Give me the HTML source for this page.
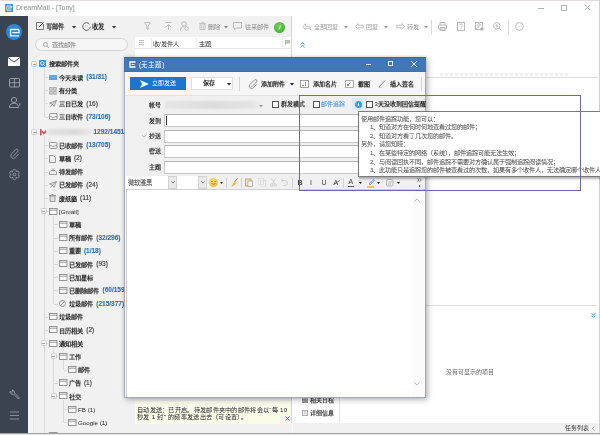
<!DOCTYPE html><html lang="zh-CN"><head><meta charset="utf-8"><style>
html,body{margin:0;padding:0;width:600px;height:435px;overflow:hidden;background:#fff;font-family:"Liberation Sans",sans-serif;}
.t{position:absolute;white-space:nowrap;}
.w{font-weight:normal}
#root{position:absolute;left:0;top:0;width:600px;height:435px;will-change:transform}
svg{overflow:visible}
</style></head><body><div id="root">
<div style="position:absolute;left:0px;top:0px;width:600px;height:1px;background:#e2dddd"></div>
<div style="position:absolute;left:5px;top:4px;width:8px;height:8px;background:#4497d3"></div>
<svg style="position:absolute;left:5px;top:4px;" width="8" height="8" viewBox="0 0 8 8"><path d="M6.3 2H1.8V6.2H6.3M6.3 2V4H3" stroke="#e8f4ff" stroke-width="0.9" fill="none"/></svg>
<div class="t" style="left:16.0px;top:3.2px;font-size:7px;line-height:10px;color:#8e8e8e;font-weight:normal;">DreamMail - [Tony]</div>
<div style="position:absolute;left:538px;top:8px;width:6px;height:1px;background:#b0b0b0"></div>
<svg style="position:absolute;left:561px;top:5px;" width="6" height="6" viewBox="0 0 6 6"><rect x="0.5" y="0.5" width="5" height="5" stroke="#acacac" stroke-width="0.9" fill="none"/></svg>
<svg style="position:absolute;left:585px;top:5px;" width="5" height="5" viewBox="0 0 5 5"><path d="M0 0L5 5M5 0L0 5" stroke="#acacac" stroke-width="0.9"/></svg>
<div style="position:absolute;left:0px;top:16px;width:28px;height:419px;background:#3a4350"></div>
<div style="position:absolute;left:6px;top:24px;width:16px;height:16px;background:#2a87d6;border-radius:50%"></div>
<svg style="position:absolute;left:6px;top:24px;" width="16" height="16" viewBox="0 0 16 16"><path d="M13 5.5H4.5V11.8H13M13 5.5V8.6H6.3" stroke="#e6f3ff" stroke-width="1.3" fill="none"/></svg>
<svg style="position:absolute;left:8px;top:57px;" width="12" height="9" viewBox="0 0 12 9"><rect x="0" y="0" width="12" height="9" fill="#fff"/><path d="M0 0.5L6 5L12 0.5" stroke="#3a4350" stroke-width="1" fill="none"/></svg>
<svg style="position:absolute;left:9px;top:78px;" width="11" height="10" viewBox="0 0 11 10"><rect x="0.5" y="0.5" width="10" height="8.5" rx="1" stroke="#a3a9b1" stroke-width="0.9" fill="none"/><path d="M5.5 0.5v8.5M0.5 4.75h10" stroke="#a3a9b1" stroke-width="0.8"/></svg>
<svg style="position:absolute;left:9px;top:97px;" width="12" height="11" viewBox="0 0 12 11"><circle cx="5" cy="3" r="2.6" stroke="#a3a9b1" stroke-width="0.9" fill="none"/><path d="M0.5 10.5c0-3 2-4.3 4.5-4.3s4.5 1.3 4.5 4.3z" stroke="#a3a9b1" stroke-width="0.9" fill="none"/><path d="M10.8 6v3" stroke="#a3a9b1" stroke-width="0.8"/></svg>
<svg style="position:absolute;left:9.5px;top:147.5px;" width="10" height="11" viewBox="0 0 10 11"><path d="M3.2 8.2L7.6 3.6a1.4 1.4 0 0 0-2-2L1.6 5.8a2.6 2.6 0 0 0 3.7 3.7L9 5.6" stroke="#9aa1aa" stroke-width="0.9" fill="none"/></svg>
<svg style="position:absolute;left:9px;top:168.5px;" width="11" height="11" viewBox="0 0 11 11"><path d="M3.85 2.64 C3.37 -0.32 7.63 -0.32 7.15 2.64 C9.48 0.75 11.61 4.43 8.80 5.50 C11.61 6.57 9.48 10.25 7.15 8.36 C7.63 11.32 3.37 11.32 3.85 8.36 C1.52 10.25 -0.61 6.57 2.20 5.50 C-0.61 4.43 1.52 0.75 3.85 2.64z" stroke="#9aa1aa" stroke-width="0.9" fill="none"/><circle cx="5.5" cy="5.5" r="1.4" stroke="#9aa1aa" stroke-width="0.9" fill="none"/></svg>
<svg style="position:absolute;left:9px;top:389px;" width="11" height="11" viewBox="0 0 11 11"><path d="M1 2.5a2.5 2.5 0 0 0 3.5 2.5l5 5 1-1-5-5A2.5 2.5 0 0 0 3 1l1.2 1.2-1 1z" stroke="#9aa1aa" stroke-width="0.9" fill="none"/></svg>
<svg style="position:absolute;left:10px;top:411px;" width="9" height="9" viewBox="0 0 9 9"><path d="M0 1h9M0 4.5h9M0 8h9" stroke="#8e959e" stroke-width="0.9"/></svg>
<div style="position:absolute;left:28px;top:16px;width:264px;height:419px;background:#f1f1f1"></div>
<div style="position:absolute;left:28px;top:60px;width:5px;height:373px;background:#f5f5f5"></div>
<div style="position:absolute;left:33px;top:60px;width:1px;height:373px;background:#e7e7e7"></div>
<svg style="position:absolute;left:36px;top:22px;" width="8" height="8" viewBox="0 0 8 8"><path d="M6.5 0.5H0.5v7h7V2" stroke="#666" stroke-width="0.9" fill="none"/><path d="M3 5l4.5-4.5" stroke="#444" stroke-width="1"/></svg>
<div class="t" style="left:46.0px;top:22.2px;font-size:6.3px;line-height:9px;color:#2a2a2a;font-weight:600;">写邮件</div>
<svg style="position:absolute;left:71.5px;top:26px;" width="4" height="2.5" viewBox="0 0 4 2.5"><path d="M0 0h4L2 2.5z" fill="#333"/></svg>
<svg style="position:absolute;left:82px;top:22px;" width="9" height="9" viewBox="0 0 9 9"><path d="M7.5 2.2A3.8 3.8 0 1 0 8.3 4.8" stroke="#555" stroke-width="0.9" fill="none"/></svg>
<div class="t" style="left:92.0px;top:22.2px;font-size:6.3px;line-height:9px;color:#2a2a2a;font-weight:600;">收发</div>
<svg style="position:absolute;left:111.5px;top:26px;" width="4" height="2.5" viewBox="0 0 4 2.5"><path d="M0 0h4L2 2.5z" fill="#333"/></svg>
<div style="position:absolute;left:35px;top:38px;width:93px;height:13px;box-sizing:border-box;border:1px solid #d4d4d4;border-radius:7px;background:#f5f5f5"></div>
<svg style="position:absolute;left:43px;top:41.5px;" width="6" height="6" viewBox="0 0 6 6"><circle cx="2.5" cy="2.5" r="2" stroke="#999" stroke-width="0.8" fill="none"/><path d="M4 4l1.8 1.8" stroke="#999" stroke-width="0.8"/></svg>
<div class="t" style="left:52.0px;top:40.1px;font-size:6.2px;line-height:9px;color:#777;font-weight:500;">查找邮件</div>
<div style="position:absolute;left:44px;top:67px;width:1px;height:50px;background:#d9d9d9"></div>
<div style="position:absolute;left:44px;top:136px;width:1px;height:300px;background:#d9d9d9"></div>
<div style="position:absolute;left:53px;top:216px;width:1px;height:88px;background:#d9d9d9"></div>
<div style="position:absolute;left:53px;top:348px;width:1px;height:48px;background:#d9d9d9"></div>
<div style="position:absolute;left:63px;top:360px;width:1px;height:10px;background:#d9d9d9"></div>
<div style="position:absolute;left:63px;top:400px;width:1px;height:23px;background:#d9d9d9"></div>
<div style="position:absolute;left:31px;top:61px;width:6px;height:6px;box-sizing:border-box;border:1px solid #cdcdcd;border-radius:1.5px;background:#f6f6f6"></div>
<div style="position:absolute;left:32.5px;top:63.5px;width:3px;height:1px;background:#a8a8a8"></div>
<div style="position:absolute;left:39px;top:60px;width:7px;height:7px;background:#3892db;border-radius:1px"></div>
<svg style="position:absolute;left:39px;top:60px;" width="7" height="7" viewBox="0 0 7 7"><circle cx="3.3" cy="3.3" r="1.7" stroke="#fff" stroke-width="0.9" fill="none"/><path d="M4.5 4.5l1.3 1.3" stroke="#fff" stroke-width="0.9"/></svg>
<div class="t" style="left:49.0px;top:59.2px;font-size:6.2px;line-height:9px;color:#262626;font-weight:600;">搜索邮件夹</div>
<div style="position:absolute;left:45px;top:77px;width:3px;height:1px;background:#d9d9d9"></div>
<div style="position:absolute;left:49px;top:74.5px;width:8px;height:5px;background:#5ea2e2"></div>
<svg style="position:absolute;left:49px;top:74.5px;" width="8" height="5" viewBox="0 0 8 5"><path d="M0.3 0.5L4 2.8L7.7 0.5" stroke="#8cc0ee" stroke-width="0.6" fill="none"/></svg>
<div class="t" style="left:59.0px;top:72.5px;font-size:6.2px;line-height:9px;color:#262626;font-weight:600;">今天未读</div>
<div class="t" style="left:86.3px;top:72.0px;font-size:6.5px;line-height:10px;color:#2f6fb8;font-weight:bold;-webkit-text-stroke:0.1px #2f6fb8">(31/31)</div>
<div style="position:absolute;left:45px;top:90px;width:3px;height:1px;background:#d9d9d9"></div>
<svg style="position:absolute;left:49px;top:86.5px;" width="8" height="8" viewBox="0 0 8 8"><rect x="0.7" y="0.7" width="2.4" height="2.4" stroke="#8c8c8c" stroke-width="0.8" fill="none"/><rect x="4.7" y="0.7" width="2.4" height="2.4" stroke="#8c8c8c" stroke-width="0.8" fill="none"/><rect x="0.7" y="4.7" width="2.4" height="2.4" stroke="#8c8c8c" stroke-width="0.8" fill="none"/><rect x="4.7" y="4.7" width="2.4" height="2.4" stroke="#8c8c8c" stroke-width="0.8" fill="none"/></svg>
<div class="t" style="left:59.0px;top:85.7px;font-size:6.2px;line-height:9px;color:#262626;font-weight:600;">有分类</div>
<div style="position:absolute;left:45px;top:103px;width:3px;height:1px;background:#d9d9d9"></div>
<svg style="position:absolute;left:49px;top:100px;" width="8" height="7" viewBox="0 0 8 7"><path d="M0.5 3L7.5 0.5L5 6.5L3.5 4z M3.5 4L7.5 0.5 M1.5 6.5L3.5 4" stroke="#8c8c8c" stroke-width="0.8" fill="none"/></svg>
<div class="t" style="left:59.0px;top:99.0px;font-size:6.2px;line-height:9px;color:#262626;font-weight:600;">三日已发</div>
<div class="t" style="left:86.3px;top:98.5px;font-size:6.5px;line-height:10px;color:#3a3a3a;font-weight:normal;-webkit-text-stroke:0.15px #3a3a3a">(16)</div>
<div style="position:absolute;left:45px;top:117px;width:3px;height:1px;background:#d9d9d9"></div>
<svg style="position:absolute;left:49px;top:113px;" width="8" height="7" viewBox="0 0 8 7"><rect x="0.5" y="0.5" width="7.5" height="6" rx="1" stroke="#8c8c8c" stroke-width="0.9" fill="none"/><path d="M0.5 3.5h2l0.8 1h1.9l0.8-1h2" stroke="#8c8c8c" stroke-width="0.8" fill="none"/></svg>
<div class="t" style="left:59.0px;top:112.2px;font-size:6.2px;line-height:9px;color:#262626;font-weight:600;">三日收件</div>
<div class="t" style="left:86.3px;top:111.7px;font-size:6.5px;line-height:10px;color:#2f6fb8;font-weight:bold;-webkit-text-stroke:0.1px #2f6fb8">(73/106)</div>
<div style="position:absolute;left:31px;top:129px;width:6px;height:6px;box-sizing:border-box;border:1px solid #cdcdcd;border-radius:1.5px;background:#f6f6f6"></div>
<div style="position:absolute;left:32.5px;top:131.5px;width:3px;height:1px;background:#a8a8a8"></div>
<svg style="position:absolute;left:40px;top:128px;" width="7" height="8" viewBox="0 0 7 8"><path d="M0.8 1v6.5" stroke="#a8323e" stroke-width="1.2"/><path d="M1.5 1.8L3.8 4.2 6.2 1.8V4.5L3.8 6.6 1.5 4.5z" fill="#e4505e"/></svg>
<div style="position:absolute;left:48px;top:129px;width:45px;height:6px;background:linear-gradient(90deg,#e2e2e2,#d9d9d9 60%,#ebebeb);filter:blur(1px)"></div>
<div class="t" style="left:93.5px;top:127.0px;font-size:6.5px;line-height:10px;color:#2f6fb8;font-weight:bold;-webkit-text-stroke:0.1px #2f6fb8">1292/1451)</div>
<div style="position:absolute;left:45px;top:145px;width:3px;height:1px;background:#d9d9d9"></div>
<svg style="position:absolute;left:49px;top:142px;" width="8" height="7" viewBox="0 0 8 7"><rect x="0.5" y="0.5" width="7.5" height="6" rx="1" stroke="#8c8c8c" stroke-width="0.9" fill="none"/><path d="M0.5 3.5h2l0.8 1h1.9l0.8-1h2" stroke="#8c8c8c" stroke-width="0.8" fill="none"/></svg>
<div class="t" style="left:59.0px;top:140.7px;font-size:6.2px;line-height:9px;color:#262626;font-weight:600;">已收邮件</div>
<div class="t" style="left:86.3px;top:140.2px;font-size:6.5px;line-height:10px;color:#2f6fb8;font-weight:bold;-webkit-text-stroke:0.1px #2f6fb8">(13/705)</div>
<div style="position:absolute;left:45px;top:158px;width:3px;height:1px;background:#d9d9d9"></div>
<svg style="position:absolute;left:49px;top:154.5px;" width="7" height="8" viewBox="0 0 7 8"><path d="M0.5 0.5h4l2 2v5h-6z" stroke="#8c8c8c" stroke-width="0.9" fill="none"/></svg>
<div class="t" style="left:59.0px;top:153.9px;font-size:6.2px;line-height:9px;color:#262626;font-weight:600;">草稿</div>
<div class="t" style="left:73.9px;top:153.4px;font-size:6.5px;line-height:10px;color:#3a3a3a;font-weight:normal;-webkit-text-stroke:0.15px #3a3a3a">(2)</div>
<div style="position:absolute;left:45px;top:172px;width:3px;height:1px;background:#d9d9d9"></div>
<svg style="position:absolute;left:49px;top:168px;" width="8" height="7" viewBox="0 0 8 7"><path d="M0.5 6.5h7v-2.5l-1.5-1.5h-4l-1.5 1.5z" stroke="#8c8c8c" stroke-width="0.8" fill="none"/><path d="M4 0.3v3" stroke="#8c8c8c" stroke-width="0.8"/></svg>
<div class="t" style="left:59.0px;top:167.1px;font-size:6.2px;line-height:9px;color:#262626;font-weight:600;">待发邮件</div>
<div style="position:absolute;left:45px;top:185px;width:3px;height:1px;background:#d9d9d9"></div>
<svg style="position:absolute;left:49px;top:181px;" width="8" height="7" viewBox="0 0 8 7"><path d="M0.5 3L7.5 0.5L5 6.5L3.5 4z M3.5 4L7.5 0.5 M1.5 6.5L3.5 4" stroke="#8c8c8c" stroke-width="0.8" fill="none"/></svg>
<div class="t" style="left:59.0px;top:180.3px;font-size:6.2px;line-height:9px;color:#262626;font-weight:600;">已发邮件</div>
<div class="t" style="left:86.3px;top:179.8px;font-size:6.5px;line-height:10px;color:#3a3a3a;font-weight:normal;-webkit-text-stroke:0.15px #3a3a3a">(24)</div>
<div style="position:absolute;left:45px;top:198px;width:3px;height:1px;background:#d9d9d9"></div>
<svg style="position:absolute;left:49px;top:193.5px;" width="7" height="8" viewBox="0 0 7 8"><path d="M1 2h5v5.5h-5z" stroke="#8c8c8c" stroke-width="0.8" fill="#ddd"/><path d="M0 1.5h7 M2.5 0.5h2" stroke="#8c8c8c" stroke-width="0.8"/></svg>
<div class="t" style="left:59.0px;top:193.5px;font-size:6.2px;line-height:9px;color:#262626;font-weight:600;">废纸篓</div>
<div class="t" style="left:80.1px;top:193.0px;font-size:6.5px;line-height:10px;color:#3a3a3a;font-weight:normal;-webkit-text-stroke:0.15px #3a3a3a">(11)</div>
<div style="position:absolute;left:45px;top:211px;width:3px;height:1px;background:#d9d9d9"></div>
<div style="position:absolute;left:40.5px;top:208px;width:6px;height:6px;box-sizing:border-box;border:1px solid #cdcdcd;border-radius:1.5px;background:#f6f6f6"></div>
<div style="position:absolute;left:42.0px;top:210.5px;width:3px;height:1px;background:#a8a8a8"></div>
<svg style="position:absolute;left:49px;top:208px;" width="8" height="7" viewBox="0 0 8 7"><rect x="0.5" y="0.5" width="7.5" height="6" stroke="#8c8c8c" stroke-width="0.9" fill="#fafafa"/><path d="M0.5 2.2h7.5" stroke="#8c8c8c" stroke-width="0.9"/></svg>
<div class="t" style="left:59.0px;top:206.7px;font-size:6.2px;line-height:9px;color:#262626;font-weight:600;"><span class="w">[Gmail]</span></div>
<div style="position:absolute;left:54px;top:224px;width:4px;height:1px;background:#d9d9d9"></div>
<svg style="position:absolute;left:59px;top:221px;" width="8" height="7" viewBox="0 0 8 7"><rect x="0.5" y="0.5" width="7.5" height="6" stroke="#8c8c8c" stroke-width="0.9" fill="#fafafa"/><path d="M0.5 2.2h7.5" stroke="#8c8c8c" stroke-width="0.9"/></svg>
<div class="t" style="left:69.0px;top:219.9px;font-size:6.2px;line-height:9px;color:#262626;font-weight:600;">草稿</div>
<div style="position:absolute;left:54px;top:238px;width:4px;height:1px;background:#d9d9d9"></div>
<svg style="position:absolute;left:59px;top:234px;" width="8" height="7" viewBox="0 0 8 7"><rect x="0.5" y="0.5" width="7.5" height="6" stroke="#8c8c8c" stroke-width="0.9" fill="#fafafa"/><path d="M0.5 2.2h7.5" stroke="#8c8c8c" stroke-width="0.9"/></svg>
<div class="t" style="left:69.0px;top:233.1px;font-size:6.2px;line-height:9px;color:#262626;font-weight:600;">所有邮件</div>
<div class="t" style="left:96.3px;top:232.6px;font-size:6.5px;line-height:10px;color:#2f6fb8;font-weight:bold;-webkit-text-stroke:0.1px #2f6fb8">(32/296)</div>
<div style="position:absolute;left:54px;top:251px;width:4px;height:1px;background:#d9d9d9"></div>
<svg style="position:absolute;left:59px;top:247px;" width="8" height="7" viewBox="0 0 8 7"><rect x="0.5" y="0.5" width="7.5" height="6" stroke="#8c8c8c" stroke-width="0.9" fill="#fafafa"/><path d="M0.5 2.2h7.5" stroke="#8c8c8c" stroke-width="0.9"/></svg>
<div class="t" style="left:69.0px;top:246.3px;font-size:6.2px;line-height:9px;color:#262626;font-weight:600;">重要</div>
<div class="t" style="left:83.9px;top:245.8px;font-size:6.5px;line-height:10px;color:#2f6fb8;font-weight:bold;-webkit-text-stroke:0.1px #2f6fb8">(1/18)</div>
<div style="position:absolute;left:54px;top:264px;width:4px;height:1px;background:#d9d9d9"></div>
<svg style="position:absolute;left:59px;top:260px;" width="8" height="7" viewBox="0 0 8 7"><rect x="0.5" y="0.5" width="7.5" height="6" stroke="#8c8c8c" stroke-width="0.9" fill="#fafafa"/><path d="M0.5 2.2h7.5" stroke="#8c8c8c" stroke-width="0.9"/></svg>
<div class="t" style="left:69.0px;top:259.5px;font-size:6.2px;line-height:9px;color:#262626;font-weight:600;">已发邮件</div>
<div class="t" style="left:96.3px;top:259.0px;font-size:6.5px;line-height:10px;color:#3a3a3a;font-weight:normal;-webkit-text-stroke:0.15px #3a3a3a">(93)</div>
<div style="position:absolute;left:54px;top:277px;width:4px;height:1px;background:#d9d9d9"></div>
<svg style="position:absolute;left:59px;top:274px;" width="8" height="7" viewBox="0 0 8 7"><rect x="0.5" y="0.5" width="7.5" height="6" stroke="#8c8c8c" stroke-width="0.9" fill="#fafafa"/><path d="M0.5 2.2h7.5" stroke="#8c8c8c" stroke-width="0.9"/></svg>
<div class="t" style="left:69.0px;top:272.7px;font-size:6.2px;line-height:9px;color:#262626;font-weight:600;">已加星标</div>
<div style="position:absolute;left:54px;top:290px;width:4px;height:1px;background:#d9d9d9"></div>
<svg style="position:absolute;left:59px;top:287px;" width="8" height="7" viewBox="0 0 8 7"><rect x="0.5" y="0.5" width="7.5" height="6" stroke="#8c8c8c" stroke-width="0.9" fill="#fafafa"/><path d="M0.5 2.2h7.5" stroke="#8c8c8c" stroke-width="0.9"/></svg>
<div class="t" style="left:69.0px;top:285.9px;font-size:6.2px;line-height:9px;color:#262626;font-weight:600;">已删除邮件</div>
<div class="t" style="left:102.5px;top:285.4px;font-size:6.5px;line-height:10px;color:#2f6fb8;font-weight:bold;-webkit-text-stroke:0.1px #2f6fb8">(60/159)</div>
<div style="position:absolute;left:54px;top:304px;width:4px;height:1px;background:#d9d9d9"></div>
<svg style="position:absolute;left:59px;top:300px;" width="7" height="7" viewBox="0 0 7 7"><circle cx="3.5" cy="3.5" r="3" stroke="#8c8c8c" stroke-width="0.9" fill="none"/><path d="M1.5 5.5l4-4" stroke="#8c8c8c" stroke-width="0.9"/></svg>
<div class="t" style="left:69.0px;top:299.1px;font-size:6.2px;line-height:9px;color:#262626;font-weight:600;">垃圾邮件</div>
<div class="t" style="left:96.3px;top:298.6px;font-size:6.5px;line-height:10px;color:#2f6fb8;font-weight:bold;-webkit-text-stroke:0.1px #2f6fb8">(215/377)</div>
<div style="position:absolute;left:45px;top:317px;width:3px;height:1px;background:#d9d9d9"></div>
<svg style="position:absolute;left:49px;top:313px;" width="8" height="7" viewBox="0 0 8 7"><rect x="0.5" y="0.5" width="7.5" height="6" stroke="#8c8c8c" stroke-width="0.9" fill="#fafafa"/><path d="M0.5 2.2h7.5" stroke="#8c8c8c" stroke-width="0.9"/></svg>
<div class="t" style="left:59.0px;top:312.3px;font-size:6.2px;line-height:9px;color:#262626;font-weight:600;">垃圾邮件</div>
<div style="position:absolute;left:45px;top:330px;width:3px;height:1px;background:#d9d9d9"></div>
<svg style="position:absolute;left:49px;top:326px;" width="8" height="7" viewBox="0 0 8 7"><rect x="0.5" y="0.5" width="7.5" height="6" stroke="#8c8c8c" stroke-width="0.9" fill="#fafafa"/><path d="M0.5 2.2h7.5" stroke="#8c8c8c" stroke-width="0.9"/></svg>
<div class="t" style="left:59.0px;top:325.5px;font-size:6.2px;line-height:9px;color:#262626;font-weight:600;">日历相关</div>
<div class="t" style="left:86.3px;top:325.0px;font-size:6.5px;line-height:10px;color:#3a3a3a;font-weight:normal;-webkit-text-stroke:0.15px #3a3a3a">(2)</div>
<div style="position:absolute;left:45px;top:343px;width:3px;height:1px;background:#d9d9d9"></div>
<div style="position:absolute;left:40.5px;top:340px;width:6px;height:6px;box-sizing:border-box;border:1px solid #cdcdcd;border-radius:1.5px;background:#f6f6f6"></div>
<div style="position:absolute;left:42.0px;top:342.5px;width:3px;height:1px;background:#a8a8a8"></div>
<svg style="position:absolute;left:49px;top:340px;" width="8" height="7" viewBox="0 0 8 7"><rect x="0.5" y="0.5" width="7.5" height="6" stroke="#8c8c8c" stroke-width="0.9" fill="#fafafa"/><path d="M0.5 2.2h7.5" stroke="#8c8c8c" stroke-width="0.9"/></svg>
<div class="t" style="left:59.0px;top:338.7px;font-size:6.2px;line-height:9px;color:#262626;font-weight:600;">通知相关</div>
<div style="position:absolute;left:54px;top:356px;width:4px;height:1px;background:#d9d9d9"></div>
<div style="position:absolute;left:50.5px;top:353px;width:6px;height:6px;box-sizing:border-box;border:1px solid #cdcdcd;border-radius:1.5px;background:#f6f6f6"></div>
<div style="position:absolute;left:52.0px;top:355.5px;width:3px;height:1px;background:#a8a8a8"></div>
<svg style="position:absolute;left:59px;top:353px;" width="8" height="7" viewBox="0 0 8 7"><rect x="0.5" y="0.5" width="7.5" height="6" stroke="#8c8c8c" stroke-width="0.9" fill="#fafafa"/><path d="M0.5 2.2h7.5" stroke="#8c8c8c" stroke-width="0.9"/></svg>
<div class="t" style="left:69.0px;top:351.9px;font-size:6.2px;line-height:9px;color:#262626;font-weight:600;">工作</div>
<div style="position:absolute;left:64px;top:370px;width:3px;height:1px;background:#d9d9d9"></div>
<svg style="position:absolute;left:68px;top:366px;" width="8" height="7" viewBox="0 0 8 7"><rect x="0.5" y="0.5" width="7.5" height="6" stroke="#8c8c8c" stroke-width="0.9" fill="#fafafa"/><path d="M0.5 2.2h7.5" stroke="#8c8c8c" stroke-width="0.9"/></svg>
<div class="t" style="left:78.0px;top:365.1px;font-size:6.2px;line-height:9px;color:#262626;font-weight:600;">邮件</div>
<div style="position:absolute;left:54px;top:383px;width:4px;height:1px;background:#d9d9d9"></div>
<svg style="position:absolute;left:59px;top:379px;" width="8" height="7" viewBox="0 0 8 7"><rect x="0.5" y="0.5" width="7.5" height="6" stroke="#8c8c8c" stroke-width="0.9" fill="#fafafa"/><path d="M0.5 2.2h7.5" stroke="#8c8c8c" stroke-width="0.9"/></svg>
<div class="t" style="left:69.0px;top:378.3px;font-size:6.2px;line-height:9px;color:#262626;font-weight:600;">广告</div>
<div class="t" style="left:83.9px;top:377.8px;font-size:6.5px;line-height:10px;color:#3a3a3a;font-weight:normal;-webkit-text-stroke:0.15px #3a3a3a">(1)</div>
<div style="position:absolute;left:54px;top:396px;width:4px;height:1px;background:#d9d9d9"></div>
<div style="position:absolute;left:50.5px;top:393px;width:6px;height:6px;box-sizing:border-box;border:1px solid #cdcdcd;border-radius:1.5px;background:#f6f6f6"></div>
<div style="position:absolute;left:52.0px;top:395.5px;width:3px;height:1px;background:#a8a8a8"></div>
<svg style="position:absolute;left:59px;top:392px;" width="8" height="7" viewBox="0 0 8 7"><rect x="0.5" y="0.5" width="7.5" height="6" stroke="#8c8c8c" stroke-width="0.9" fill="#fafafa"/><path d="M0.5 2.2h7.5" stroke="#8c8c8c" stroke-width="0.9"/></svg>
<div class="t" style="left:69.0px;top:391.5px;font-size:6.2px;line-height:9px;color:#262626;font-weight:600;">社交</div>
<div style="position:absolute;left:64px;top:409px;width:3px;height:1px;background:#d9d9d9"></div>
<svg style="position:absolute;left:68px;top:406px;" width="8" height="7" viewBox="0 0 8 7"><rect x="0.5" y="0.5" width="7.5" height="6" stroke="#8c8c8c" stroke-width="0.9" fill="#fafafa"/><path d="M0.5 2.2h7.5" stroke="#8c8c8c" stroke-width="0.9"/></svg>
<div class="t" style="left:78.0px;top:404.7px;font-size:6.2px;line-height:9px;color:#262626;font-weight:600;"><span class="w">FB (1)</span></div>
<div style="position:absolute;left:64px;top:422px;width:3px;height:1px;background:#d9d9d9"></div>
<svg style="position:absolute;left:68px;top:419px;" width="8" height="7" viewBox="0 0 8 7"><rect x="0.5" y="0.5" width="7.5" height="6" stroke="#8c8c8c" stroke-width="0.9" fill="#fafafa"/><path d="M0.5 2.2h7.5" stroke="#8c8c8c" stroke-width="0.9"/></svg>
<div class="t" style="left:78.0px;top:417.9px;font-size:6.2px;line-height:9px;color:#262626;font-weight:600;"><span class="w">Google (1)</span></div>
<div style="position:absolute;left:45px;top:436px;width:3px;height:1px;background:#d9d9d9"></div>
<svg style="position:absolute;left:49px;top:432px;" width="8" height="7" viewBox="0 0 8 7"><rect x="0.5" y="0.5" width="7.5" height="6" stroke="#8c8c8c" stroke-width="0.9" fill="#fafafa"/><path d="M0.5 2.2h7.5" stroke="#8c8c8c" stroke-width="0.9"/></svg>
<div class="t" style="left:91.0px;top:430.6px;font-size:6.5px;line-height:10px;color:#2f6fb8;font-weight:bold;-webkit-text-stroke:0.1px #2f6fb8">(MD</div>
<svg style="position:absolute;left:144px;top:22px;" width="7" height="8" viewBox="0 0 7 8"><path d="M0.5 0.5h6L4 4v3.5L3 7V4z" stroke="#b4b4b4" stroke-width="0.9" fill="none"/></svg>
<svg style="position:absolute;left:165px;top:22px;" width="7" height="8" viewBox="0 0 7 8"><path d="M0.5 0.5h6M3.5 7.5V2.5M1 5l2.5-2.5L6 5" stroke="#b4b4b4" stroke-width="0.9" fill="none"/></svg>
<svg style="position:absolute;left:180px;top:21px;" width="9" height="10" viewBox="0 0 9 10"><circle cx="4" cy="3" r="2.3" stroke="#b4b4b4" stroke-width="0.9" fill="none"/><path d="M0.5 9.5c0-2.5 1.5-3.8 3.5-3.8" stroke="#b4b4b4" stroke-width="0.9" fill="none"/><circle cx="6.5" cy="7.5" r="1.8" stroke="#b4b4b4" stroke-width="0.8" fill="none"/></svg>
<svg style="position:absolute;left:199px;top:22px;" width="7" height="8" viewBox="0 0 7 8"><path d="M1 2h5v5.5h-5z" stroke="#b4b4b4" stroke-width="0.8" fill="none"/><path d="M0 1.3h7M2.5 0.4h2M2.7 3.5v3M4.3 3.5v3" stroke="#b4b4b4" stroke-width="0.7"/></svg>
<div class="t" style="left:208.0px;top:22.2px;font-size:6.2px;line-height:9px;color:#8a8a8a;font-weight:500;">删除</div>
<svg style="position:absolute;left:224px;top:26px;" width="4" height="2.5" viewBox="0 0 4 2.5"><path d="M0 0h4L2 2.5z" fill="#888"/></svg>
<svg style="position:absolute;left:233px;top:22px;" width="9" height="8" viewBox="0 0 9 8"><path d="M0.5 0.5h8v5.5h-5l-2 1.5v-1.5h-1z" stroke="#b4b4b4" stroke-width="0.9" fill="none"/></svg>
<div class="t" style="left:245.0px;top:22.2px;font-size:6.2px;line-height:9px;color:#8a8a8a;font-weight:500;">往来邮件</div>
<div style="position:absolute;left:274px;top:22px;width:11px;height:11px;background:radial-gradient(circle at 45% 40%,#7ad35a,#4bb03a 70%);border-radius:50%"></div>
<svg style="position:absolute;left:274px;top:22px;" width="11" height="11" viewBox="0 0 11 11"><path d="M5.2 7.5L6.5 3.5" stroke="#e9f7e3" stroke-width="0.8"/></svg>
<div style="position:absolute;left:135px;top:37px;width:156px;height:12px;background:#fff;border-bottom:1px solid #e6e6e6;box-sizing:border-box"></div>
<svg style="position:absolute;left:139px;top:40px;" width="5" height="5" viewBox="0 0 5 5"><path d="M0 0.5h5M0 2.5h5M0 4.5h5" stroke="#aaa" stroke-width="0.8"/></svg>
<div style="position:absolute;left:151px;top:38px;width:1px;height:10px;background:#ececec"></div>
<div class="t" style="left:153.0px;top:38.5px;font-size:6.2px;line-height:9px;color:#333;font-weight:500;">收<span class="w">/</span>发件人</div>
<div style="position:absolute;left:196px;top:38px;width:1px;height:10px;background:#ececec"></div>
<div class="t" style="left:199.0px;top:38.5px;font-size:6.2px;line-height:9px;color:#222;font-weight:500;">主题</div>
<div style="position:absolute;left:282px;top:38px;width:1px;height:10px;background:#ececec"></div>
<svg style="position:absolute;left:285px;top:40px;" width="5" height="5" viewBox="0 0 5 5"><path d="M0.5 0v5M0.5 0.5h4v2.5h-4" stroke="#aaa" stroke-width="0.8" fill="#ccc"/></svg>
<div style="position:absolute;left:135px;top:49px;width:156px;height:9px;background:#fff"></div>
<div style="position:absolute;left:291px;top:16px;width:1px;height:407px;background:#d6d6d6"></div>
<svg style="position:absolute;left:302px;top:22.5px;" width="10" height="8" viewBox="0 0 10 8"><path d="M3.5 0.8L0.6 3.8l2.9 3V5.3h2.2c1.5 0 2.6 0.6 3.3 2 0-2.4-1.3-4-3.3-4H3.5z" stroke="#b2b2b2" stroke-width="0.8" fill="none" stroke-linejoin="round"/></svg>
<div class="t" style="left:314.0px;top:22.3px;font-size:6.2px;line-height:9px;color:#999;font-weight:500;">全部回复</div>
<svg style="position:absolute;left:344px;top:26px;" width="4" height="2.5" viewBox="0 0 4 2.5"><path d="M0 0h4L2 2.5z" fill="#999"/></svg>
<svg style="position:absolute;left:355px;top:23px;" width="9" height="7" viewBox="0 0 9 7"><path d="M3.2 0.6L0.6 3.5l2.6 2.9V4.8h5V2.2h-5z" stroke="#b2b2b2" stroke-width="0.8" fill="none" stroke-linejoin="round"/></svg>
<div class="t" style="left:366.0px;top:22.3px;font-size:6.2px;line-height:9px;color:#999;font-weight:500;">回复</div>
<svg style="position:absolute;left:384px;top:26px;" width="4" height="2.5" viewBox="0 0 4 2.5"><path d="M0 0h4L2 2.5z" fill="#999"/></svg>
<svg style="position:absolute;left:396px;top:23px;" width="9" height="7" viewBox="0 0 9 7"><path d="M5.8 0.6l2.6 2.9-2.6 2.9V4.8h-5V2.2h5z" stroke="#b2b2b2" stroke-width="0.8" fill="none" stroke-linejoin="round"/></svg>
<div class="t" style="left:407.0px;top:22.3px;font-size:6.2px;line-height:9px;color:#999;font-weight:500;">转发</div>
<svg style="position:absolute;left:424px;top:26px;" width="4" height="2.5" viewBox="0 0 4 2.5"><path d="M0 0h4L2 2.5z" fill="#999"/></svg>
<div style="position:absolute;left:431px;top:20px;width:1px;height:15px;background:#d8d8d8"></div>
<svg style="position:absolute;left:438px;top:22px;" width="9" height="9" viewBox="0 0 9 9"><rect x="0.5" y="3" width="8" height="4" rx="1" stroke="#b2b2b2" stroke-width="0.9" fill="none"/><path d="M2 3V0.5h5V3M2 5.5h5v3H2z" stroke="#b2b2b2" stroke-width="0.9" fill="none"/></svg>
<svg style="position:absolute;left:457px;top:22px;" width="8" height="9" viewBox="0 0 8 9"><rect x="0.5" y="0.5" width="7" height="8" stroke="#b2b2b2" stroke-width="0.9" fill="none"/><path d="M2.8 3.2a1.3 1.3 0 1 1 1.8 1.2c-0.5 0.2-0.6 0.6-0.6 1" stroke="#b2b2b2" stroke-width="0.8" fill="none"/><circle cx="4" cy="7" r="0.5" fill="#b2b2b2"/></svg>
<svg style="position:absolute;left:475px;top:22px;" width="9" height="9" viewBox="0 0 9 9"><rect x="0.5" y="0.5" width="7" height="7" stroke="#b2b2b2" stroke-width="0.9" fill="none"/><circle cx="4" cy="3" r="1.3" stroke="#b2b2b2" stroke-width="0.8" fill="none"/><path d="M1.5 7c0.5-1.5 1.5-2 2.5-2" stroke="#b2b2b2" stroke-width="0.8" fill="none"/><rect x="5.5" y="5.5" width="3" height="3" fill="#b2b2b2"/></svg>
<svg style="position:absolute;left:493px;top:22px;" width="9" height="9" viewBox="0 0 9 9"><circle cx="3.8" cy="3.8" r="3.2" stroke="#b2b2b2" stroke-width="0.9" fill="none"/><path d="M6.2 6.2L8.5 8.5M2.3 3.8h3M3.8 2.3v3" stroke="#b2b2b2" stroke-width="0.9"/></svg>
<div style="position:absolute;left:508px;top:20px;width:1px;height:15px;background:#d8d8d8"></div>
<svg style="position:absolute;left:515px;top:22px;" width="9" height="9" viewBox="0 0 9 9"><circle cx="4.5" cy="4.5" r="3.9" stroke="#b2b2b2" stroke-width="0.9" fill="none"/><path d="M2.7 4.6h0.6M4.2 4.6h0.6M5.7 4.6h0.6" stroke="#b2b2b2" stroke-width="0.9"/></svg>
<svg style="position:absolute;left:299.5px;top:42px;" width="5" height="6" viewBox="0 0 5 6"><path d="M0.5 2.6L2.5 0.8 4.5 2.6M0.5 5.2L2.5 3.4 4.5 5.2" stroke="#2a8fb5" stroke-width="1" fill="none"/></svg>
<div style="position:absolute;left:440px;top:73px;width:130px;height:3px;background:repeating-linear-gradient(90deg,#f0f0f0 0 3px,#fafafa 3px 5px);filter:blur(0.5px)"></div>
<div style="position:absolute;left:293px;top:77px;width:305px;height:1px;background:#dcdcdc"></div>
<div style="position:absolute;left:599px;top:0px;width:1px;height:435px;background:#cfcfcf"></div>
<div style="position:absolute;left:293px;top:305px;width:304px;height:1px;background:#dedede"></div>
<svg style="position:absolute;left:591px;top:313px;" width="5" height="5" viewBox="0 0 5 5"><path d="M0.5 0.5L2.5 2 4.5 0.5M0.5 2.8L2.5 4.3 4.5 2.8" stroke="#2b8ab8" stroke-width="0.9" fill="none"/></svg>
<div class="t" style="left:446.0px;top:368.2px;font-size:6px;line-height:9px;color:#666;font-weight:500;">没有可显示的项目</div>
<div style="position:absolute;left:339px;top:398px;width:1px;height:25px;background:#e4e4e4"></div>
<svg style="position:absolute;left:302px;top:397px;" width="6" height="6" viewBox="0 0 6 6"><rect x="0" y="0" width="6" height="6" fill="#999"/><path d="M0 1.5h6" stroke="#ccc" stroke-width="0.6"/></svg>
<div class="t" style="left:310.0px;top:395.5px;font-size:6px;line-height:9px;color:#444;font-weight:600;">相关日程</div>
<svg style="position:absolute;left:302px;top:410px;" width="6" height="6" viewBox="0 0 6 6"><rect x="0.4" y="0.4" width="5.2" height="5.2" stroke="#999" stroke-width="0.8" fill="none"/><path d="M1.5 2h3M1.5 3.8h3" stroke="#999" stroke-width="0.7"/></svg>
<div class="t" style="left:310.0px;top:408.5px;font-size:6px;line-height:9px;color:#444;font-weight:600;">详细信息</div>
<div style="position:absolute;left:293px;top:423px;width:305px;height:10px;background:#f0f0f0"></div>
<div class="t" style="left:565.0px;top:423.5px;font-size:6px;line-height:9px;color:#333;font-weight:500;">任务列表</div>
<svg style="position:absolute;left:592px;top:426px;" width="3" height="5" viewBox="0 0 3 5"><path d="M2.5 0.3L0.5 2.5l2 2.2" stroke="#888" stroke-width="0.7" fill="none"/></svg>
<div style="position:absolute;left:0px;top:433px;width:600px;height:1px;background:#a4a4a4"></div>
<div style="position:absolute;left:0px;top:434px;width:600px;height:1px;background:#e6e6e6"></div>
<div style="position:absolute;left:135px;top:401px;width:156px;height:23px;background:#fbfbe9"></div>
<div style="position:absolute;left:135px;top:401px;width:156px;height:23px;overflow:hidden">
<div class="t" style="left:2.0px;top:3.5px;font-size:6.2px;line-height:9px;color:#262626;font-weight:500;letter-spacing:0.3px">自动发送：已开启。待发邮件夹中的邮件将会以“每<span class="w"> 10</span></div>
<div class="t" style="left:2.0px;top:11.0px;font-size:6.2px;line-height:9px;color:#262626;font-weight:500;letter-spacing:0.3px">秒发<span class="w"> 1 </span>封”<span class="w"> </span>的频率发送出去（可设置）。</div>
</div>
<svg style="position:absolute;left:285px;top:416px;" width="5" height="5" viewBox="0 0 5 5"><path d="M0.5 0.5l4 4M4.5 0.5l-4 4" stroke="#2a9bb0" stroke-width="1"/></svg>
<div style="position:absolute;left:124px;top:57px;width:302px;height:341px;box-sizing:border-box;background:#f0f0f0;border:1px solid #a0a8bc;border-left:2px solid #a6abbf;box-shadow:2px 2px 6px rgba(0,0,0,0.25),0 0 4px rgba(0,0,0,0.14)"></div>
<div style="position:absolute;left:124px;top:57px;width:302px;height:15px;background:#4277b5;border-top:1px solid #3868a4;border-bottom:1px solid #3d70ad;box-sizing:border-box"></div>
<svg style="position:absolute;left:129px;top:61px;" width="7" height="7" viewBox="0 0 7 7"><path d="M6.5 1H1v5h5.5" stroke="#fff" stroke-width="1.3" fill="none"/><path d="M2.5 3.5h3" stroke="#fff" stroke-width="1"/></svg>
<div class="t" style="left:139.0px;top:59.5px;font-size:6.5px;line-height:10px;color:#fff;font-weight:500;"><span class="w">(</span>无主题<span class="w">)</span></div>
<div style="position:absolute;left:366px;top:64px;width:5px;height:1px;background:#e8eef7"></div>
<div style="position:absolute;left:388px;top:61px;width:5px;height:5px;box-sizing:border-box;border:1px solid #e8eef7"></div>
<svg style="position:absolute;left:411px;top:61px;" width="6" height="6" viewBox="0 0 6 6"><path d="M0.3 0.3L5.7 5.7M5.7 0.3L0.3 5.7" stroke="#e8eef7" stroke-width="1"/></svg>
<div style="position:absolute;left:125px;top:72px;width:300px;height:23px;background:#f6f6f6"></div>
<div style="position:absolute;left:125px;top:72px;width:1px;height:325px;background:#fafafa"></div>
<div style="position:absolute;left:125px;top:95px;width:300px;height:1px;background:#e2e2e2"></div>
<div style="position:absolute;left:130px;top:77px;width:56px;height:13px;background:#1b74cf"></div>
<svg style="position:absolute;left:140px;top:79.5px;" width="9" height="8" viewBox="0 0 9 8"><path d="M0 0L9 4L0 8L2 4z" fill="#f0f8ff"/></svg>
<div class="t" style="left:152.0px;top:79.0px;font-size:6px;line-height:9px;color:#fff;font-weight:500;">立即发送</div>
<div style="position:absolute;left:191px;top:77px;width:42px;height:13px;box-sizing:border-box;background:#fff;border:1px solid #dedede"></div>
<div class="t" style="left:203.0px;top:79.0px;font-size:6px;line-height:9px;color:#222;font-weight:600;">保存</div>
<svg style="position:absolute;left:227px;top:83px;" width="4" height="2.5" viewBox="0 0 4 2.5"><path d="M0 0h4L2 2.5z" fill="#222"/></svg>
<div style="position:absolute;left:239px;top:77px;width:1px;height:14px;background:#d6d6d6"></div>
<svg style="position:absolute;left:249px;top:79px;" width="9" height="9" viewBox="0 0 9 9"><path d="M2.5 8l5-5a1.4 1.4 0 0 0-2-2L1 5.5a2.3 2.3 0 0 0 3.3 3.3l3.5-3.5" stroke="#888" stroke-width="0.9" fill="none"/></svg>
<div class="t" style="left:261.0px;top:79.5px;font-size:6px;line-height:9px;color:#222;font-weight:600;">添加附件</div>
<svg style="position:absolute;left:290px;top:83px;" width="4" height="2.5" viewBox="0 0 4 2.5"><path d="M0 0h4L2 2.5z" fill="#222"/></svg>
<svg style="position:absolute;left:300px;top:79.5px;" width="9" height="8" viewBox="0 0 9 8"><rect x="0.5" y="0.5" width="8" height="7" stroke="#888" stroke-width="0.8" fill="#fff"/><path d="M2 5.5h2M5.5 2v4" stroke="#777" stroke-width="0.8"/></svg>
<div class="t" style="left:313.0px;top:79.5px;font-size:6px;line-height:9px;color:#222;font-weight:600;">添加名片</div>
<svg style="position:absolute;left:345px;top:79.5px;" width="9" height="8" viewBox="0 0 9 8"><rect x="0.5" y="0.5" width="8" height="7" stroke="#999" stroke-width="0.8" fill="#fff"/><path d="M2.5 5.5l3-3M2.5 4v1.5h1.5" stroke="#666" stroke-width="0.8" fill="none"/></svg>
<div class="t" style="left:357.5px;top:79.5px;font-size:6px;line-height:9px;color:#222;font-weight:600;">截图</div>
<svg style="position:absolute;left:378px;top:79px;" width="8" height="9" viewBox="0 0 8 9"><path d="M1 8L7 1.5" stroke="#777" stroke-width="1"/><path d="M0.5 8.5h3" stroke="#aaa" stroke-width="0.6"/></svg>
<div class="t" style="left:390.0px;top:79.5px;font-size:6px;line-height:9px;color:#222;font-weight:600;">插入签名</div>
<div style="position:absolute;left:421px;top:77px;width:1px;height:14px;background:#d6d6d6"></div>
<div class="t" style="left:149.0px;top:100.8px;font-size:6px;line-height:9px;color:#333;font-weight:600;">帐号</div>
<div style="position:absolute;left:165px;top:101px;width:97px;height:8px;background:linear-gradient(90deg,#e6e6e6,#dcdcdc 50%,#e4e4e4 90%,#efefef);filter:blur(0.8px)"></div>
<svg style="position:absolute;left:259px;top:105px;" width="4" height="2.5" viewBox="0 0 4 2.5"><path d="M0 0h4L2 2.5z" fill="#999"/></svg>
<div style="position:absolute;left:272px;top:101px;width:7px;height:7px;box-sizing:border-box;border:1px solid #555;background:#fff"></div>
<div class="t" style="left:281.0px;top:100.3px;font-size:6px;line-height:9px;color:#333;font-weight:600;">群发模式</div>
<div style="position:absolute;left:313px;top:101px;width:7px;height:7px;box-sizing:border-box;border:1px solid #555;background:#fff"></div>
<div class="t" style="left:321.0px;top:100.3px;font-size:6px;line-height:9px;color:#3a86d0;font-weight:500;">邮件追踪</div>
<div style="position:absolute;left:352px;top:98px;width:12px;height:12px;background:#dce9f5"></div>
<div style="position:absolute;left:355px;top:101px;width:7px;height:7px;background:radial-gradient(circle at 45% 40%,#4fb0ee,#1e88d8);border-radius:50%"></div>
<div style="position:absolute;left:358.2px;top:103px;width:1px;height:3px;background:#fff"></div>
<div style="position:absolute;left:366px;top:101px;width:7px;height:7px;box-sizing:border-box;border:1px solid #555;background:#fff"></div>
<div class="t" style="left:374.5px;top:100.3px;font-size:6px;line-height:9px;color:#222;font-weight:600;"><span class="w">3</span>天没收到回信提醒</div>
<div class="t" style="left:149.0px;top:116.8px;font-size:6px;line-height:9px;color:#333;font-weight:600;">发到</div>
<div style="position:absolute;left:164px;top:114px;width:258px;height:13px;box-sizing:border-box;background:#fff;border:1px solid #c9c9c9;border-top-color:#b4b4b4"></div>
<div class="t" style="left:149.0px;top:131.8px;font-size:6px;line-height:9px;color:#333;font-weight:600;">抄送</div>
<div style="position:absolute;left:164px;top:130px;width:258px;height:13px;box-sizing:border-box;background:#fff;border:1px solid #c9c9c9;border-top-color:#b4b4b4"></div>
<div class="t" style="left:149.0px;top:147.3px;font-size:6px;line-height:9px;color:#333;font-weight:600;">密送</div>
<div style="position:absolute;left:164px;top:145px;width:258px;height:13px;box-sizing:border-box;background:#fff;border:1px solid #c9c9c9;border-top-color:#b4b4b4"></div>
<div class="t" style="left:149.0px;top:162.5px;font-size:6px;line-height:9px;color:#333;font-weight:600;">主题</div>
<div style="position:absolute;left:164px;top:161px;width:258px;height:13px;box-sizing:border-box;background:#fff;border:1px solid #c9c9c9;border-top-color:#b4b4b4"></div>
<div style="position:absolute;left:166px;top:116px;width:1px;height:9px;background:#333"></div>
<svg style="position:absolute;left:142px;top:135px;" width="4" height="3" viewBox="0 0 4 3"><path d="M0.3 0.3L2 2.2 3.7 0.3" stroke="#999" stroke-width="0.7" fill="none"/></svg>
<div style="position:absolute;left:126px;top:176px;width:50px;height:13px;background:#fff"></div>
<div class="t" style="left:127.5px;top:177.9px;font-size:6.3px;line-height:9px;color:#333;font-weight:500;">微软雅黑</div>
<div style="position:absolute;left:168px;top:176px;width:9px;height:13px;box-sizing:border-box;background:#e9e9e9;border:1px solid #d2d2d2"></div>
<svg style="position:absolute;left:170.5px;top:181px;" width="4" height="3" viewBox="0 0 4 3"><path d="M0.3 0.3L2 2.2 3.7 0.3" stroke="#666" stroke-width="0.7" fill="none"/></svg>
<div style="position:absolute;left:177px;top:176px;width:29px;height:13px;background:#fff"></div>
<div style="position:absolute;left:198px;top:176px;width:9px;height:13px;box-sizing:border-box;background:#e9e9e9;border:1px solid #d2d2d2"></div>
<svg style="position:absolute;left:200.5px;top:181px;" width="4" height="3" viewBox="0 0 4 3"><path d="M0.3 0.3L2 2.2 3.7 0.3" stroke="#666" stroke-width="0.7" fill="none"/></svg>
<div style="position:absolute;left:209px;top:178px;width:9px;height:9px;background:radial-gradient(circle at 45% 40%,#ffe27a,#e8b420);border-radius:50%"></div>
<svg style="position:absolute;left:209px;top:178px;" width="9" height="9" viewBox="0 0 9 9"><circle cx="3" cy="3.5" r="0.6" fill="#6b4a00"/><circle cx="6" cy="3.5" r="0.6" fill="#6b4a00"/><path d="M2.5 5.5q2 1.5 4 0" stroke="#6b4a00" stroke-width="0.6" fill="none"/></svg>
<svg style="position:absolute;left:220px;top:182px;" width="3" height="2" viewBox="0 0 3 2"><path d="M0 0h3L1.5 2z" fill="#333"/></svg>
<div style="position:absolute;left:226px;top:178px;width:1px;height:10px;background:#d0d0d0"></div>
<svg style="position:absolute;left:230px;top:178px;" width="8" height="9" viewBox="0 0 8 9"><path d="M7.5 0.5L4.5 4" stroke="#b5802a" stroke-width="1"/><path d="M1 8.5l3.5-5 2 2-4.5 3z" fill="#e8b84a"/></svg>
<div style="position:absolute;left:241px;top:178px;width:1px;height:10px;background:#d0d0d0"></div>
<svg style="position:absolute;left:245px;top:178px;" width="8" height="9" viewBox="0 0 8 9"><rect x="0.5" y="1" width="5.5" height="7" stroke="#c09a50" stroke-width="0.8" fill="#f4e4b8"/><rect x="3" y="3" width="4.5" height="5.5" stroke="#999" stroke-width="0.7" fill="#fff"/></svg>
<svg style="position:absolute;left:258px;top:178px;" width="8" height="9" viewBox="0 0 8 9"><rect x="0.5" y="0.5" width="5" height="6" stroke="#ddd" stroke-width="0.8" fill="none"/><rect x="2.5" y="2.5" width="5" height="6" stroke="#ddd" stroke-width="0.8" fill="none"/></svg>
<svg style="position:absolute;left:270px;top:178px;" width="7" height="9" viewBox="0 0 7 9"><circle cx="1.8" cy="7" r="1.3" stroke="#ccc" stroke-width="0.8" fill="none"/><circle cx="5.2" cy="7" r="1.3" stroke="#ccc" stroke-width="0.8" fill="none"/><path d="M2.5 6L5.5 0.5M4.5 6L1.5 0.5" stroke="#ccc" stroke-width="0.8"/></svg>
<svg style="position:absolute;left:281px;top:178px;" width="7" height="9" viewBox="0 0 7 9"><path d="M2 0.5L0.5 2.5 2.5 4M0.5 2.5h3.5a2.5 2.5 0 0 1 0 5H2" stroke="#ccc" stroke-width="0.9" fill="none"/></svg>
<div style="position:absolute;left:292px;top:178px;width:1px;height:10px;background:#d0d0d0"></div>
<div class="t" style="left:297.5px;top:177.5px;font-size:7px;line-height:10px;color:#444;font-weight:bold;font-family:"Liberation Serif",serif">B</div>
<div class="t" style="left:310.0px;top:177.5px;font-size:7px;line-height:10px;color:#444;font-weight:normal;font-family:"Liberation Serif",serif;font-style:italic">I</div>
<div class="t" style="left:321.5px;top:177.5px;font-size:7px;line-height:10px;color:#444;font-weight:normal;font-family:"Liberation Serif",serif;text-decoration:underline">U</div>
<div class="t" style="left:333.5px;top:177.5px;font-size:7px;line-height:10px;color:#444;font-weight:normal;font-family:"Liberation Serif",serif;font-style:italic">A</div>
<svg style="position:absolute;left:333px;top:180px;" width="7" height="5" viewBox="0 0 7 5"><path d="M0 4.5L7 0.5" stroke="#444" stroke-width="0.6"/></svg>
<div style="position:absolute;left:343px;top:178px;width:1px;height:10px;background:#d0d0d0"></div>
<div class="t" style="left:348.5px;top:177.0px;font-size:7px;line-height:10px;color:#444;font-weight:normal;font-family:"Liberation Serif",serif">A</div>
<div style="position:absolute;left:348px;top:186px;width:6px;height:1.3px;background:#555"></div>
<svg style="position:absolute;left:358.5px;top:182px;" width="3" height="2" viewBox="0 0 3 2"><path d="M0 0h3L1.5 2z" fill="#222"/></svg>
<svg style="position:absolute;left:367px;top:177.5px;" width="8" height="9" viewBox="0 0 8 9"><path d="M2 6L6.5 1.5l1 1L3 7z" stroke="#5a8ad0" stroke-width="0.8" fill="#cfe0f5"/></svg>
<div style="position:absolute;left:366.5px;top:186px;width:7px;height:1.5px;background:#f2c94c"></div>
<svg style="position:absolute;left:377px;top:182px;" width="3" height="2" viewBox="0 0 3 2"><path d="M0 0h3L1.5 2z" fill="#222"/></svg>
<svg style="position:absolute;left:386px;top:178.5px;" width="8" height="8" viewBox="0 0 8 8"><rect x="0.5" y="0.5" width="6.5" height="6.5" rx="1.5" stroke="#999" stroke-width="0.7" fill="none"/><path d="M2 3h4M2 5h3" stroke="#999" stroke-width="0.6"/></svg>
<svg style="position:absolute;left:396.5px;top:182px;" width="3" height="2" viewBox="0 0 3 2"><path d="M0 0h3L1.5 2z" fill="#222"/></svg>
<svg style="position:absolute;left:417px;top:178px;" width="5" height="4" viewBox="0 0 5 4"><path d="M0.3 0.3L2 2 0.3 3.7M2.5 0.3L4.2 2 2.5 3.7" stroke="#333" stroke-width="0.7" fill="none"/></svg>
<div style="position:absolute;left:418.5px;top:185px;width:1.5px;height:1.5px;background:#333;border-radius:50%"></div>
<div style="position:absolute;left:126px;top:189px;width:299px;height:208px;box-sizing:border-box;background:#fff;border-top:1px solid #d0d0d0;border-left:1px solid #cfcfcf"></div>
<div style="position:absolute;left:412px;top:190px;width:13px;height:207px;background:#fbfbfb"></div>
<svg style="position:absolute;left:414px;top:198px;" width="6" height="4" viewBox="0 0 6 4"><path d="M0.5 3.5L3 0.8 5.5 3.5" stroke="#aaa" stroke-width="0.8" fill="none"/></svg>
<svg style="position:absolute;left:414px;top:382px;" width="6" height="4" viewBox="0 0 6 4"><path d="M0.5 0.5L3 3.2 5.5 0.5" stroke="#aaa" stroke-width="0.8" fill="none"/></svg>
<div style="position:absolute;left:358px;top:111px;width:250px;height:66px;box-sizing:border-box;background:#fff;border:1px solid #7a7a7a;box-shadow:1px 2px 2px rgba(0,0,0,0.3)"></div>
<div class="t" style="left:361.0px;top:113.5px;font-size:6.2px;line-height:9px;color:#444;font-weight:500;">使用邮件追踪功能，您可以：</div>
<div class="t" style="left:370.0px;top:122.1px;font-size:6.2px;line-height:9px;color:#444;font-weight:500;"><span class="w">1</span>、知道对方在何时何地查看过您的邮件；</div>
<div class="t" style="left:370.0px;top:130.7px;font-size:6.2px;line-height:9px;color:#444;font-weight:500;"><span class="w">2</span>、知道对方看了几次您的邮件。</div>
<div class="t" style="left:361.0px;top:139.3px;font-size:6.2px;line-height:9px;color:#444;font-weight:500;">另外，请您知晓：</div>
<div class="t" style="left:370.0px;top:147.9px;font-size:6.2px;line-height:9px;color:#444;font-weight:500;"><span class="w">1</span>、在某些特定的网络（系统），邮件追踪可能无法生效；</div>
<div class="t" style="left:370.0px;top:156.5px;font-size:6.2px;line-height:9px;color:#444;font-weight:500;"><span class="w">2</span>、与阅读回执不同，邮件追踪不需要对方确认属于强制追踪阅读情况；</div>
<div class="t" style="left:370.0px;top:165.1px;font-size:6.2px;line-height:9px;color:#444;font-weight:500;"><span class="w">3</span>、此功能只是追踪您的邮件被查看过的次数，如果有多个收件人，无法确定哪个收件人查看</div>
<div style="position:absolute;left:299px;top:94.5px;width:282px;height:96.5px;box-sizing:border-box;border:1.6px solid #6868ac"></div>
</div></body></html>
